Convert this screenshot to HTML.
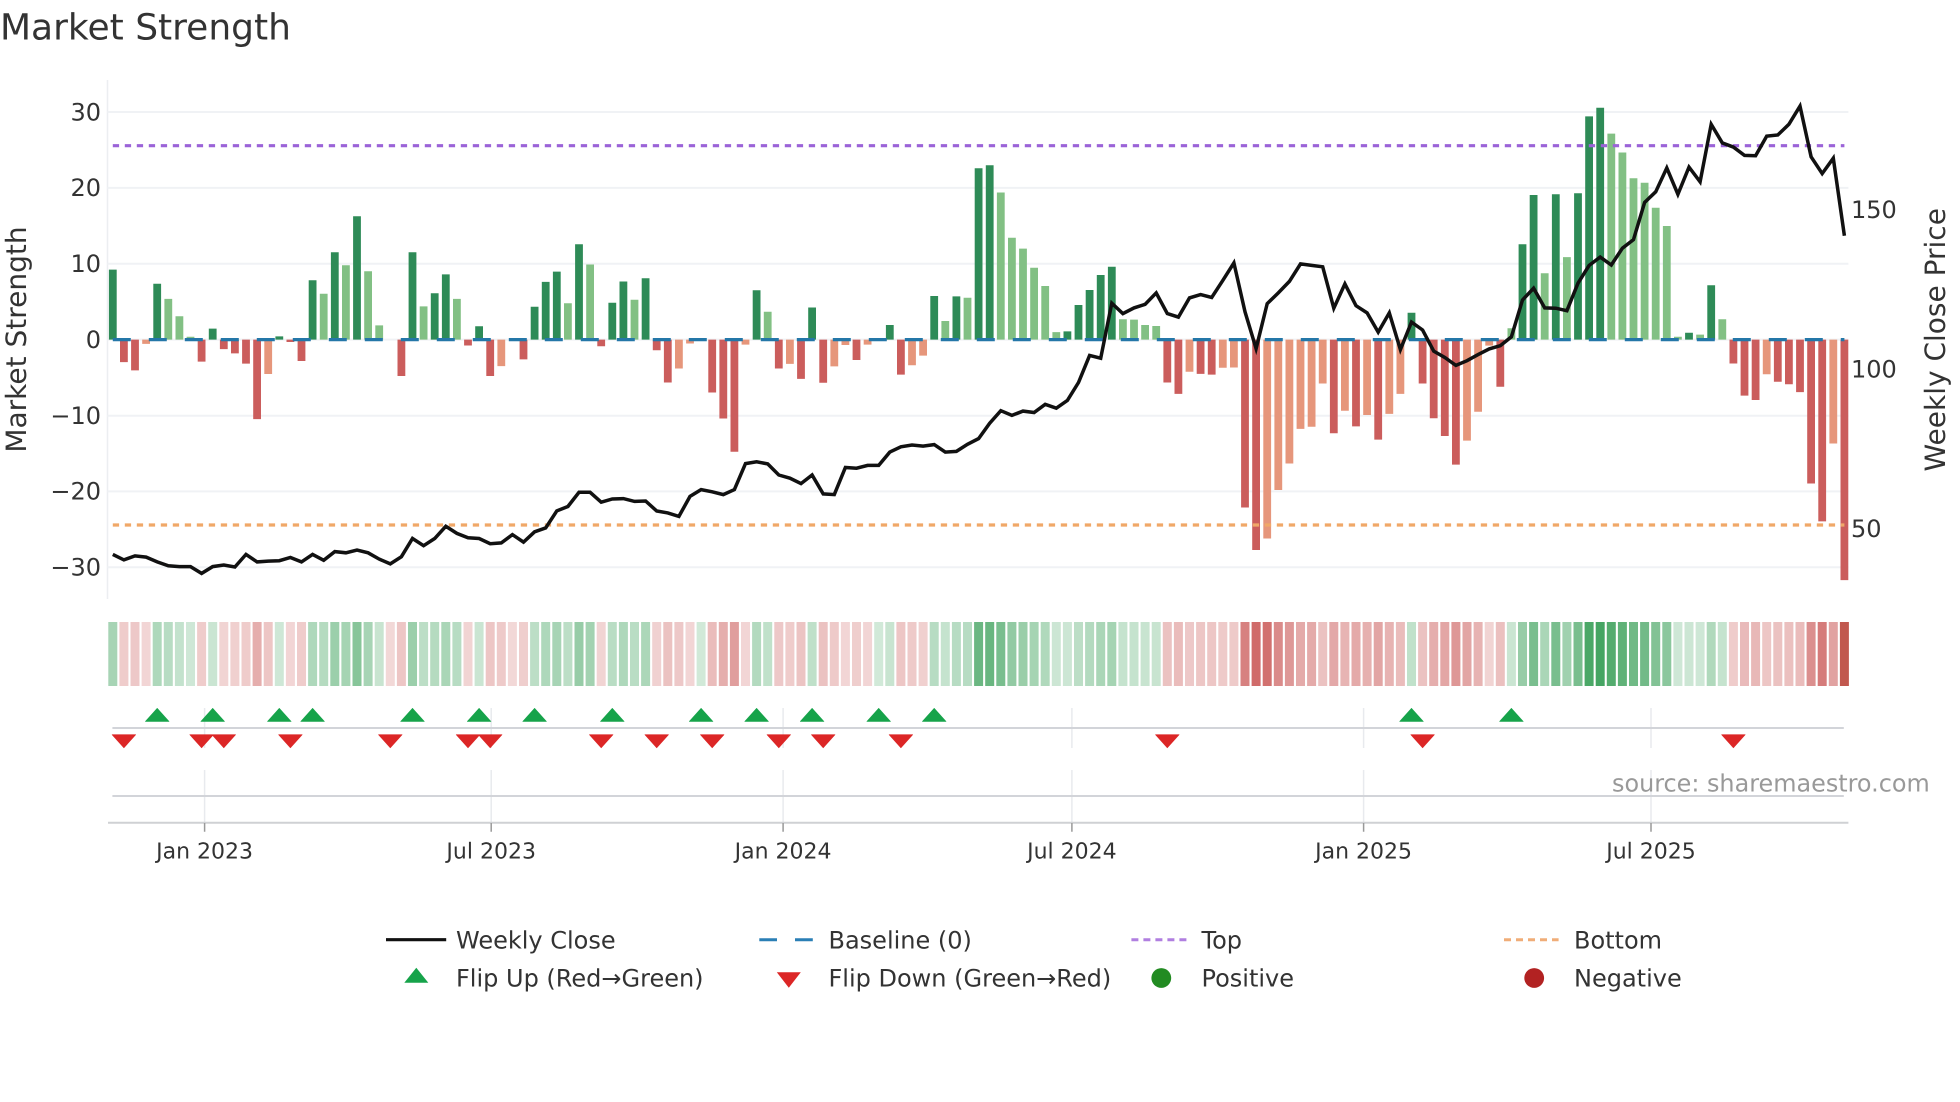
<!DOCTYPE html>
<html><head><meta charset="utf-8"><title>Market Strength</title>
<style>
html,body{margin:0;padding:0;background:#fff;width:1960px;height:1102px;overflow:hidden}
svg{display:block}
text{font-family:"DejaVu Sans","Liberation Sans",sans-serif;fill:#333;text-rendering:geometricPrecision}
.t{font-size:24px}
.x{font-size:22px}
.l{font-size:24px}
</style></head><body>
<svg width="1960" height="1102" viewBox="0 0 1960 1102" xmlns="http://www.w3.org/2000/svg">
<rect width="1960" height="1102" fill="#fff"/>
<text x="0" y="39.5" style="font-size:36px">Market Strength</text>

<!-- grid -->
<path d="M107.5 80V599" stroke="#eceef1" stroke-width="1.5" fill="none"/>
<path d="M107.5 112H1848.4M107.5 187.9H1848.4M107.5 263.7H1848.4M107.5 339.6H1848.4M107.5 415.7H1848.4M107.5 491.4H1848.4M107.5 567.2H1848.4" stroke="#f0f2f5" stroke-width="2" fill="none"/>

<!-- bars -->
<g fill="none" stroke-width="7.8">
<path stroke="#2e8b57" d="M112.8 339.6v-70M157.2 339.6v-55.8M212.7 339.6v-11M279.3 339.6v-3.2M312.6 339.6v-59.3M334.8 339.6v-87.4M357 339.6v-123.4M412.5 339.6v-87.4M434.7 339.6v-46.3M445.8 339.6v-65.2M479.1 339.6v-13.4M534.6 339.6v-32.8M545.7 339.6v-57.7M556.8 339.6v-68M579 339.6v-95.3M612.3 339.6v-36.8M623.4 339.6v-58.1M645.6 339.6v-61.3M756.6 339.6v-49.3M812.1 339.6v-32.1M889.8 339.6v-14.6M934.2 339.6v-43.6M956.4 339.6v-43.2M978.6 339.6v-171.4M989.7 339.6v-174.3M1067.4 339.6v-8.2M1078.5 339.6v-34.6M1089.6 339.6v-49.6M1100.7 339.6v-64.6M1111.8 339.6v-72.9M1411.5 339.6v-26.8M1522.5 339.6v-95.4M1533.6 339.6v-144.6M1555.8 339.6v-145.4M1578 339.6v-146.4M1589.1 339.6v-223.2M1600.2 339.6v-231.8M1689 339.6v-6.8M1711.2 339.6v-54.3"/>
<path stroke="#82c084" d="M168.3 339.6v-40.7M179.4 339.6v-23.3M190.5 339.6v-2.8M323.7 339.6v-45.9M345.9 339.6v-74.3M368.1 339.6v-68.4M379.2 339.6v-14.2M423.6 339.6v-33.2M456.9 339.6v-40.7M567.9 339.6v-36.4M590.1 339.6v-75.1M634.5 339.6v-39.9M767.7 339.6v-27.9M945.3 339.6v-18.6M967.5 339.6v-41.8M1000.8 339.6v-147.1M1011.9 339.6v-101.8M1023 339.6v-91M1034.1 339.6v-71.8M1045.2 339.6v-53.6M1056.3 339.6v-7.5M1122.9 339.6v-20.4M1134 339.6v-20M1145.1 339.6v-14.6M1156.2 339.6v-13.6M1511.4 339.6v-11.4M1544.7 339.6v-66.4M1566.9 339.6v-82.5M1611.3 339.6v-206M1622.4 339.6v-187.1M1633.5 339.6v-161.4M1644.6 339.6v-156.8M1655.7 339.6v-131.8M1666.8 339.6v-113.6M1677.9 339.6v-2.9M1700.1 339.6v-5M1722.3 339.6v-20.4"/>
<path stroke="#cb5d5c" d="M123.9 339.6v22.5M135 339.6v30.8M201.6 339.6v22M223.8 339.6v9.5M234.9 339.6v13.8M246 339.6v24M257.1 339.6v79.5M290.4 339.6v2.4M301.5 339.6v21.4M401.4 339.6v36.4M468 339.6v5.9M490.2 339.6v36.4M523.5 339.6v19.8M601.2 339.6v6.7M656.7 339.6v10.7M667.8 339.6v42.9M712.2 339.6v52.9M723.3 339.6v78.9M734.4 339.6v112.1M778.8 339.6v28.9M801 339.6v39.3M823.2 339.6v43.2M856.5 339.6v20.4M900.9 339.6v35M1167.3 339.6v42.9M1178.4 339.6v54.3M1200.6 339.6v34.3M1211.7 339.6v35M1245 339.6v167.9M1256.1 339.6v210.4M1333.8 339.6v93.6M1356 339.6v86.8M1378.2 339.6v100M1422.6 339.6v43.9M1433.7 339.6v78.6M1444.8 339.6v96.4M1455.9 339.6v125M1500.3 339.6v47.1M1733.4 339.6v23.9M1744.5 339.6v56M1755.6 339.6v60.4M1777.8 339.6v42.1M1788.9 339.6v44.6M1800 339.6v52.5M1811.1 339.6v143.9M1822.2 339.6v181.8M1844.4 339.6v240.5"/>
<path stroke="#e6967b" d="M146.1 339.6v4.3M268.2 339.6v34.4M501.3 339.6v26.5M678.9 339.6v28.9M690 339.6v3.9M745.5 339.6v5M789.9 339.6v24.3M834.3 339.6v26.8M845.4 339.6v5.4M867.6 339.6v5M912 339.6v25.7M923.1 339.6v16M1189.5 339.6v32.1M1222.8 339.6v28.2M1233.9 339.6v27.9M1267.2 339.6v198.9M1278.3 339.6v150.4M1289.4 339.6v123.9M1300.5 339.6v89.3M1311.6 339.6v87.1M1322.7 339.6v43.9M1344.9 339.6v71.1M1367.1 339.6v75.4M1389.3 339.6v74.3M1400.4 339.6v54.3M1467 339.6v101M1478.1 339.6v72.1M1489.2 339.6v6M1766.7 339.6v34.6M1833.3 339.6v103.9"/>
</g>

<!-- reference lines -->
<path d="M112.8 339.6H1844.4" stroke="#2477a8" stroke-width="3.2" stroke-dasharray="18 18" fill="none"/>
<path d="M112.8 145.7H1844.4" stroke="#9b63d8" stroke-width="3.2" stroke-dasharray="6.3 5.7" fill="none"/>
<path d="M112.8 525H1844.4" stroke="#f0a868" stroke-width="3.2" stroke-dasharray="6.3 5.7" fill="none"/>

<!-- weekly close -->
<polyline fill="none" stroke="#111" stroke-width="3.5" points="112.8,554.4 123.9,559.9 135,555.9 146.1,557.1 157.2,561.9 168.3,565.8 179.4,566.6 190.5,566.6 201.6,573.4 212.7,566.6 223.8,565 234.9,567 246,554.4 257.1,561.9 268.2,561.1 279.3,560.7 290.4,557.5 301.5,561.9 312.6,554.4 323.7,560.3 334.8,551.6 345.9,552.8 357,550 368.1,552.8 379.2,559.1 390.3,563.9 401.4,556.7 412.5,538.5 423.6,545.7 434.7,538.5 445.8,526.3 456.9,533.4 468,537.8 479.1,538.5 490.2,543.7 501.3,542.9 512.4,534.6 523.5,542.1 534.6,531.8 545.7,527.9 556.8,510.9 567.9,506.5 579,492.3 590.1,492.3 601.2,502.2 612.3,499 623.4,498.6 634.5,501.4 645.6,501 656.7,511 667.8,512.9 678.9,516.4 690,496.4 701.1,489.6 712.2,491.8 723.3,494.6 734.4,489.6 745.5,463.6 756.6,461.8 767.7,463.9 778.8,475 789.9,478.2 801,483.6 812.1,475 823.2,493.9 834.3,494.6 845.4,467.5 856.5,468.2 867.6,465.4 878.7,465.4 889.8,452.1 900.9,446.8 912,445 923.1,446.1 934.2,444.6 945.3,452.1 956.4,451.4 967.5,444.3 978.6,438.6 989.7,423.2 1000.8,410.7 1011.9,415.4 1023,411.1 1034.1,412.5 1045.2,404.3 1056.3,408.2 1067.4,400.4 1078.5,382.5 1089.6,355.4 1100.7,358.2 1111.8,303.2 1122.9,313.6 1134,307.9 1145.1,304.3 1156.2,292.9 1167.3,313.6 1178.4,317.1 1189.5,297.9 1200.6,294.6 1211.7,297.5 1222.8,280.4 1233.9,262.9 1245,311.8 1256.1,348.6 1267.2,303.6 1278.3,292.9 1289.4,281.4 1300.5,263.9 1311.6,265.4 1322.7,266.8 1333.8,308.2 1344.9,283.9 1356,305.7 1367.1,312.9 1378.2,332.1 1389.3,312.9 1400.4,349.6 1411.5,322.1 1422.6,330 1433.7,351.1 1444.8,357.5 1455.9,365.4 1467,360.7 1478.1,354.6 1489.2,348.9 1500.3,345.7 1511.4,336.8 1522.5,300 1533.6,288.2 1544.7,307.9 1555.8,308.2 1566.9,310.7 1578,283.2 1589.1,265.4 1600.2,257.1 1611.3,265 1622.4,248.2 1633.5,239.6 1644.6,202.5 1655.7,191.8 1666.8,167.9 1677.9,194.3 1689,167.1 1700.1,181.8 1711.2,124.3 1722.3,142.9 1733.4,147.1 1744.5,155.4 1755.6,155.7 1766.7,136.1 1777.8,135 1788.9,124.3 1800,106.1 1811.1,156.8 1822.2,173.6 1833.3,158.2 1844.4,235.7"/>

<!-- y ticks left -->
<g text-anchor="end">
<text class="t" x="101" y="120.3">30</text>
<text class="t" x="101" y="196.2">20</text>
<text class="t" x="101" y="272">10</text>
<text class="t" x="101" y="347.9">0</text>
<text class="t" x="101" y="424">−10</text>
<text class="t" x="101" y="499.7">−20</text>
<text class="t" x="101" y="575.5">−30</text>
</g>
<!-- y ticks right -->
<text class="t" x="1851" y="218.2">150</text>
<text class="t" x="1851" y="377.5">100</text>
<text class="t" x="1851" y="536.8">50</text>

<text transform="translate(26 339.5) rotate(-90)" text-anchor="middle" style="font-size:28px">Market Strength</text>
<text transform="translate(1945 339.8) rotate(-90)" text-anchor="middle" style="font-size:28px">Weekly Close Price</text>

<!-- heat strip green -->
<g fill="none" stroke="#188f3c" stroke-width="9">
<path d="M112.8 622v64" stroke-opacity=".38"/><path d="M157.2 622v64" stroke-opacity=".35"/><path d="M168.3 622v64" stroke-opacity=".31"/><path d="M179.4 622v64" stroke-opacity=".26"/><path d="M190.5 622v64" stroke-opacity=".21"/><path d="M212.7 622v64" stroke-opacity=".23"/><path d="M279.3 622v64" stroke-opacity=".21"/><path d="M312.6 622v64" stroke-opacity=".35"/><path d="M323.7 622v64" stroke-opacity=".32"/><path d="M334.8 622v64" stroke-opacity=".43"/><path d="M345.9 622v64" stroke-opacity=".39"/><path d="M357 622v64" stroke-opacity=".52"/><path d="M368.1 622v64" stroke-opacity=".38"/><path d="M379.2 622v64" stroke-opacity=".24"/><path d="M412.5 622v64" stroke-opacity=".43"/><path d="M423.6 622v64" stroke-opacity=".29"/><path d="M434.7 622v64" stroke-opacity=".32"/><path d="M445.8 622v64" stroke-opacity=".37"/><path d="M456.9 622v64" stroke-opacity=".31"/><path d="M479.1 622v64" stroke-opacity=".23"/><path d="M534.6 622v64" stroke-opacity=".29"/><path d="M545.7 622v64" stroke-opacity=".35"/><path d="M556.8 622v64" stroke-opacity=".38"/><path d="M567.9 622v64" stroke-opacity=".29"/><path d="M579 622v64" stroke-opacity=".45"/><path d="M590.1 622v64" stroke-opacity=".4"/><path d="M612.3 622v64" stroke-opacity=".3"/><path d="M623.4 622v64" stroke-opacity=".35"/><path d="M634.5 622v64" stroke-opacity=".3"/><path d="M645.6 622v64" stroke-opacity=".36"/><path d="M701.1 622v64" stroke-opacity=".2"/><path d="M756.6 622v64" stroke-opacity=".33"/><path d="M767.7 622v64" stroke-opacity=".27"/><path d="M812.1 622v64" stroke-opacity=".28"/><path d="M878.7 622v64" stroke-opacity=".2"/><path d="M889.8 622v64" stroke-opacity=".24"/><path d="M934.2 622v64" stroke-opacity=".31"/><path d="M945.3 622v64" stroke-opacity=".25"/><path d="M956.4 622v64" stroke-opacity=".31"/><path d="M967.5 622v64" stroke-opacity=".31"/><path d="M978.6 622v64" stroke-opacity=".64"/><path d="M989.7 622v64" stroke-opacity=".65"/><path d="M1000.8 622v64" stroke-opacity=".58"/><path d="M1011.9 622v64" stroke-opacity=".47"/><path d="M1023 622v64" stroke-opacity=".44"/><path d="M1034.1 622v64" stroke-opacity=".39"/><path d="M1045.2 622v64" stroke-opacity=".34"/><path d="M1056.3 622v64" stroke-opacity=".22"/><path d="M1067.4 622v64" stroke-opacity=".22"/><path d="M1078.5 622v64" stroke-opacity=".29"/><path d="M1089.6 622v64" stroke-opacity=".33"/><path d="M1100.7 622v64" stroke-opacity=".37"/><path d="M1111.8 622v64" stroke-opacity=".39"/><path d="M1122.9 622v64" stroke-opacity=".25"/><path d="M1134 622v64" stroke-opacity=".25"/><path d="M1145.1 622v64" stroke-opacity=".24"/><path d="M1156.2 622v64" stroke-opacity=".24"/><path d="M1411.5 622v64" stroke-opacity=".27"/><path d="M1511.4 622v64" stroke-opacity=".23"/><path d="M1522.5 622v64" stroke-opacity=".45"/><path d="M1533.6 622v64" stroke-opacity=".58"/><path d="M1544.7 622v64" stroke-opacity=".37"/><path d="M1555.8 622v64" stroke-opacity=".58"/><path d="M1566.9 622v64" stroke-opacity=".41"/><path d="M1578 622v64" stroke-opacity=".58"/><path d="M1589.1 622v64" stroke-opacity=".78"/><path d="M1600.2 622v64" stroke-opacity=".8"/><path d="M1611.3 622v64" stroke-opacity=".74"/><path d="M1622.4 622v64" stroke-opacity=".69"/><path d="M1633.5 622v64" stroke-opacity=".62"/><path d="M1644.6 622v64" stroke-opacity=".61"/><path d="M1655.7 622v64" stroke-opacity=".54"/><path d="M1666.8 622v64" stroke-opacity=".5"/><path d="M1677.9 622v64" stroke-opacity=".21"/><path d="M1689 622v64" stroke-opacity=".22"/><path d="M1700.1 622v64" stroke-opacity=".21"/><path d="M1711.2 622v64" stroke-opacity=".34"/><path d="M1722.3 622v64" stroke-opacity=".25"/>
</g>
<!-- heat strip red -->
<g fill="none" stroke="#c03a38" stroke-width="9">
<path d="M123.9 622v64" stroke-opacity=".26"/><path d="M135 622v64" stroke-opacity=".28"/><path d="M146.1 622v64" stroke-opacity=".21"/><path d="M201.6 622v64" stroke-opacity=".26"/><path d="M223.8 622v64" stroke-opacity=".22"/><path d="M234.9 622v64" stroke-opacity=".24"/><path d="M246 622v64" stroke-opacity=".26"/><path d="M257.1 622v64" stroke-opacity=".41"/><path d="M268.2 622v64" stroke-opacity=".29"/><path d="M290.4 622v64" stroke-opacity=".21"/><path d="M301.5 622v64" stroke-opacity=".26"/><path d="M390.3 622v64" stroke-opacity=".2"/><path d="M401.4 622v64" stroke-opacity=".29"/><path d="M468 622v64" stroke-opacity=".22"/><path d="M490.2 622v64" stroke-opacity=".29"/><path d="M501.3 622v64" stroke-opacity=".27"/><path d="M512.4 622v64" stroke-opacity=".2"/><path d="M523.5 622v64" stroke-opacity=".25"/><path d="M601.2 622v64" stroke-opacity=".22"/><path d="M656.7 622v64" stroke-opacity=".23"/><path d="M667.8 622v64" stroke-opacity=".31"/><path d="M678.9 622v64" stroke-opacity=".28"/><path d="M690 622v64" stroke-opacity=".21"/><path d="M712.2 622v64" stroke-opacity=".34"/><path d="M723.3 622v64" stroke-opacity=".41"/><path d="M734.4 622v64" stroke-opacity=".49"/><path d="M745.5 622v64" stroke-opacity=".21"/><path d="M778.8 622v64" stroke-opacity=".28"/><path d="M789.9 622v64" stroke-opacity=".26"/><path d="M801 622v64" stroke-opacity=".3"/><path d="M823.2 622v64" stroke-opacity=".31"/><path d="M834.3 622v64" stroke-opacity=".27"/><path d="M845.4 622v64" stroke-opacity=".21"/><path d="M856.5 622v64" stroke-opacity=".25"/><path d="M867.6 622v64" stroke-opacity=".21"/><path d="M900.9 622v64" stroke-opacity=".29"/><path d="M912 622v64" stroke-opacity=".27"/><path d="M923.1 622v64" stroke-opacity=".24"/><path d="M1167.3 622v64" stroke-opacity=".31"/><path d="M1178.4 622v64" stroke-opacity=".34"/><path d="M1189.5 622v64" stroke-opacity=".28"/><path d="M1200.6 622v64" stroke-opacity=".29"/><path d="M1211.7 622v64" stroke-opacity=".29"/><path d="M1222.8 622v64" stroke-opacity=".27"/><path d="M1233.9 622v64" stroke-opacity=".27"/><path d="M1245 622v64" stroke-opacity=".64"/><path d="M1256.1 622v64" stroke-opacity=".75"/><path d="M1267.2 622v64" stroke-opacity=".72"/><path d="M1278.3 622v64" stroke-opacity=".59"/><path d="M1289.4 622v64" stroke-opacity=".52"/><path d="M1300.5 622v64" stroke-opacity=".43"/><path d="M1311.6 622v64" stroke-opacity=".43"/><path d="M1322.7 622v64" stroke-opacity=".31"/><path d="M1333.8 622v64" stroke-opacity=".44"/><path d="M1344.9 622v64" stroke-opacity=".38"/><path d="M1356 622v64" stroke-opacity=".43"/><path d="M1367.1 622v64" stroke-opacity=".4"/><path d="M1378.2 622v64" stroke-opacity=".46"/><path d="M1389.3 622v64" stroke-opacity=".39"/><path d="M1400.4 622v64" stroke-opacity=".34"/><path d="M1422.6 622v64" stroke-opacity=".31"/><path d="M1433.7 622v64" stroke-opacity=".41"/><path d="M1444.8 622v64" stroke-opacity=".45"/><path d="M1455.9 622v64" stroke-opacity=".53"/><path d="M1467 622v64" stroke-opacity=".46"/><path d="M1478.1 622v64" stroke-opacity=".39"/><path d="M1489.2 622v64" stroke-opacity=".22"/><path d="M1500.3 622v64" stroke-opacity=".32"/><path d="M1733.4 622v64" stroke-opacity=".26"/><path d="M1744.5 622v64" stroke-opacity=".35"/><path d="M1755.6 622v64" stroke-opacity=".36"/><path d="M1766.7 622v64" stroke-opacity=".29"/><path d="M1777.8 622v64" stroke-opacity=".31"/><path d="M1788.9 622v64" stroke-opacity=".32"/><path d="M1800 622v64" stroke-opacity=".34"/><path d="M1811.1 622v64" stroke-opacity=".57"/><path d="M1822.2 622v64" stroke-opacity=".67"/><path d="M1833.3 622v64" stroke-opacity=".47"/><path d="M1844.4 622v64" stroke="#b33327" stroke-opacity=".82"/>
</g>

<!-- lower panels: vertical grid -->
<path d="M204.6 708V748M491.2 708V748M783.1 708V748M1071.9 708V748M1363.6 708V748M1651 708V748M204.6 770V822.7M491.2 770V822.7M783.1 770V822.7M1071.9 770V822.7M1363.6 770V822.7M1651 770V822.7" stroke="#e8eaee" stroke-width="1.5" fill="none"/>
<path d="M112.4 728H1843.8M112.4 796H1843.8" stroke="#d2d4d9" stroke-width="2" fill="none"/>
<path d="M108 822.7H1848.4" stroke="#cfd1d4" stroke-width="2" fill="none"/>
<path d="M204.6 823V831.7M491.2 823V831.7M783.1 823V831.7M1071.9 823V831.7M1363.6 823V831.7M1651 823V831.7" stroke="#999" stroke-width="1.5" fill="none"/>

<!-- flip markers -->
<path fill="#16a34a" stroke="#16a34a" stroke-width=".6" stroke-linejoin="round" d="M145.4 721.5l11.8-13.2 11.8 13.2zM200.9 721.5l11.8-13.2 11.8 13.2zM267.5 721.5l11.8-13.2 11.8 13.2zM300.8 721.5l11.8-13.2 11.8 13.2zM400.7 721.5l11.8-13.2 11.8 13.2zM467.3 721.5l11.8-13.2 11.8 13.2zM522.8 721.5l11.8-13.2 11.8 13.2zM600.5 721.5l11.8-13.2 11.8 13.2zM689.3 721.5l11.8-13.2 11.8 13.2zM744.8 721.5l11.8-13.2 11.8 13.2zM800.3 721.5l11.8-13.2 11.8 13.2zM866.9 721.5l11.8-13.2 11.8 13.2zM922.4 721.5l11.8-13.2 11.8 13.2zM1399.7 721.5l11.8-13.2 11.8 13.2zM1499.6 721.5l11.8-13.2 11.8 13.2z"/>
<path fill="#dc2626" stroke="#dc2626" stroke-width=".6" stroke-linejoin="round" d="M112.1 734.7l11.8 13.1 11.8-13.1zM189.8 734.7l11.8 13.1 11.8-13.1zM212 734.7l11.8 13.1 11.8-13.1zM278.6 734.7l11.8 13.1 11.8-13.1zM378.5 734.7l11.8 13.1 11.8-13.1zM456.2 734.7l11.8 13.1 11.8-13.1zM478.4 734.7l11.8 13.1 11.8-13.1zM589.4 734.7l11.8 13.1 11.8-13.1zM644.9 734.7l11.8 13.1 11.8-13.1zM700.4 734.7l11.8 13.1 11.8-13.1zM767 734.7l11.8 13.1 11.8-13.1zM811.4 734.7l11.8 13.1 11.8-13.1zM889.1 734.7l11.8 13.1 11.8-13.1zM1155.5 734.7l11.8 13.1 11.8-13.1zM1410.8 734.7l11.8 13.1 11.8-13.1zM1721.6 734.7l11.8 13.1 11.8-13.1z"/>

<!-- x labels -->
<text class="x" x="204.6" y="858.3" text-anchor="middle">Jan 2023</text>
<text class="x" x="491.2" y="858.3" text-anchor="middle">Jul 2023</text>
<text class="x" x="783.1" y="858.3" text-anchor="middle">Jan 2024</text>
<text class="x" x="1071.9" y="858.3" text-anchor="middle">Jul 2024</text>
<text class="x" x="1363.6" y="858.3" text-anchor="middle">Jan 2025</text>
<text class="x" x="1651" y="858.3" text-anchor="middle">Jul 2025</text>

<text x="1612" y="791.7" style="font-size:23.9px;fill:#999">source: sharemaestro.com</text>

<!-- legend -->
<path d="M386 939.7H446.2" stroke="#111" stroke-width="3.2" fill="none"/>
<path d="M759.3 939.7H777M795 939.7H812.8" stroke="#2a7fb5" stroke-width="3" fill="none"/>
<path d="M1131.4 939.7H1186.6" stroke="#b07fe0" stroke-width="3" stroke-dasharray="7 5" fill="none"/>
<path d="M1504 939.7H1558.6" stroke="#f0ad78" stroke-width="3" stroke-dasharray="7 5" fill="none"/>
<path d="M404.3 982.7l12-15 12 15z" fill="#16a34a"/>
<path d="M776.8 972.3l12 15.4 12-15.4z" fill="#dc2626"/>
<circle cx="1161.3" cy="978" r="9.9" fill="#228b22"/>
<circle cx="1534.2" cy="978" r="9.9" fill="#b22222"/>
<text class="l" x="456" y="948.7">Weekly Close</text>
<text class="l" x="456" y="986.7">Flip Up (Red→Green)</text>
<text class="l" x="828.5" y="948.7">Baseline (0)</text>
<text class="l" x="828.5" y="986.7">Flip Down (Green→Red)</text>
<text class="l" x="1201.5" y="948.7">Top</text>
<text class="l" x="1201.5" y="986.7">Positive</text>
<text class="l" x="1574" y="948.7">Bottom</text>
<text class="l" x="1574" y="986.7">Negative</text>
</svg>
</body></html>
